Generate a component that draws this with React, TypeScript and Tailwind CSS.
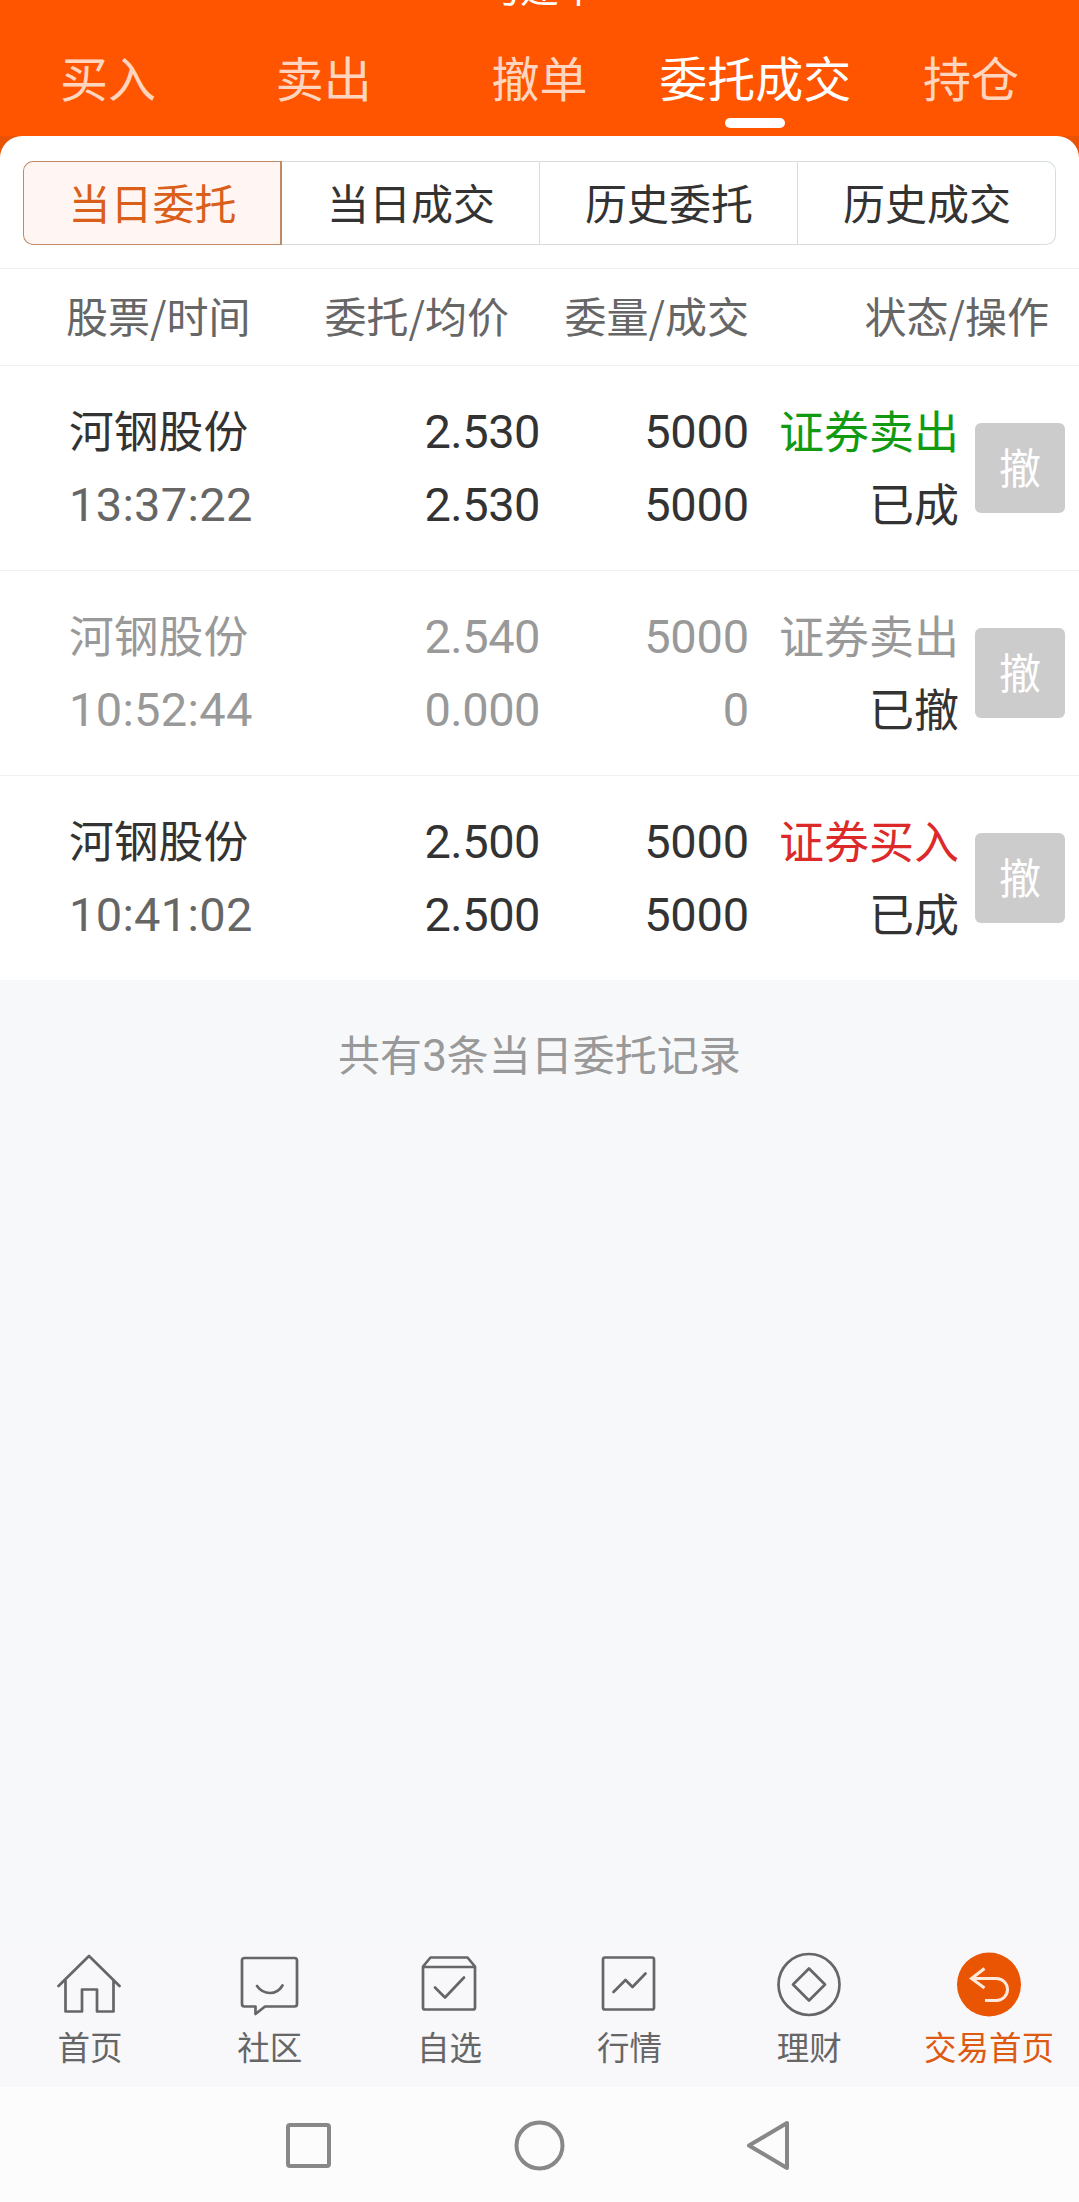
import type { ReactNode } from 'react';

/**
 * Order list screen: top trade tabs, order filter, today's orders, bottom nav.
 */

interface Order {
  name: string;
  time: string;
  price: string;
  avgPrice: string;
  amount: string;
  filled: string;
  side: string;
  sideColor: string;
  status: string;
  cancelled?: boolean;
}

const TABS = ['买入', '卖出', '撤单', '委托成交', '持仓'];
const ACTIVE_TAB = '委托成交';

const FILTERS = ['当日委托', '当日成交', '历史委托', '历史成交'];

const ORDERS: Order[] = [
  {
    name: '河钢股份', time: '13:37:22', price: '2.530', avgPrice: '2.530',
    amount: '5000', filled: '5000', side: '证券卖出', sideColor: 'text-[#129a12]', status: '已成',
  },
  {
    name: '河钢股份', time: '10:52:44', price: '2.540', avgPrice: '0.000',
    amount: '5000', filled: '0', side: '证券卖出', sideColor: 'text-[#999999]', status: '已撤', cancelled: true,
  },
  {
    name: '河钢股份', time: '10:41:02', price: '2.500', avgPrice: '2.500',
    amount: '5000', filled: '5000', side: '证券买入', sideColor: 'text-[#dc2a2a]', status: '已成',
  },
];

// ─── Icons ───────────────────────────────────────────────────────────────────

function NavIcon({ children }: { children: ReactNode }) {
  return (
    <svg
      viewBox="0 0 66 66"
      className="block h-[66px] w-[66px]"
      fill="none"
      stroke="#666666"
      strokeWidth="2.7"
      strokeLinecap="round"
      strokeLinejoin="round"
    >
      {children}
    </svg>
  );
}

const NAV_ITEMS: { label: string; icon: ReactNode; active?: boolean }[] = [
  {
    label: '首页',
    icon: <path d="M1.500 34 32 4l30.500 30M8.500 28.500v31H25V37.500h15v22h16.500v-31" />,
  },
  {
    label: '社区',
    icon: (
      <>
        <path d="M7.500 6h50q2.500 0 2.500 2.500v43.500q0 2.500-2.500 2.500H28l-9.500 7.500v-7.500h-11Q5 54.500 5 52V8.500Q5 6 7.500 6Z" />
        <path d="M20 34q5 7 13 7t12.500-7.500" />
      </>
    ),
  },
  {
    label: '自选',
    icon: (
      <>
        <path d="M6 14.500 13.500 5.500h37L58 14.500v41q0 2-2 2H8q-2 0-2-2ZM6 15h52" />
        <path d="m18 35.500 10 10 19-20" />
      </>
    ),
  },
  {
    label: '行情',
    icon: (
      <>
        <rect x="7" y="5.500" width="51" height="52" rx="2" />
        <path d="m17.500 40 12-12 7 7 13-13.500" />
      </>
    ),
  },
  {
    label: '理财',
    icon: (
      <>
        <circle cx="33" cy="32.500" r="30.500" />
        <path d="m33 16.500 16 16-16 16-16-16Z" />
      </>
    ),
  },
  {
    label: '交易首页',
    active: true,
    icon: (
      <>
        <circle cx="33" cy="32.500" r="32" fill="#ea5504" stroke="none" />
        <path d="M28.500 16.500 15.500 26.500 28.500 36M16 26.500h24.500a11 11 0 0 1 0 22H29" stroke="#ffe9dc" strokeWidth="3" strokeLinecap="butt" strokeLinejoin="miter" />
      </>
    ),
  },
];

// ─── Sections ────────────────────────────────────────────────────────────────

function TradeTabs() {
  return (
    <header className="h-[136px] bg-[#ff5500]">
      {/* account name, scrolled almost out of view */}
      <div className="flex h-[22px] justify-center overflow-hidden text-[39px] text-white">
        <span className="-mt-[34px] leading-[39px]">马建华</span>
      </div>
      <nav className="grid grid-cols-5 text-[48px]">
        {TABS.map((tab) => (
          <div key={tab} className="flex h-[114px] flex-col items-center pt-[19px]">
            <span className={`whitespace-nowrap leading-[70px] ${tab === ACTIVE_TAB ? 'text-white' : 'text-[#ffd5bf]'}`}>
              {tab}
            </span>
            {tab === ACTIVE_TAB && <span className="mt-[7px] h-2.5 w-[60px] rounded-full bg-white" />}
          </div>
        ))}
      </nav>
    </header>
  );
}

function OrderFilter() {
  return (
    <div className="px-[23px] pt-[25px] pb-[23px]">
      <div className="grid h-[84px] grid-cols-[259px_258px_258px_258px] text-[42px] leading-[60px] text-[#333333]">
        {FILTERS.map((label, i) => (
          <div
            key={label}
            className={`flex items-center justify-center border pb-[3px] pl-px ${
              i === 0
                ? 'rounded-l-[10px] border-r-2 border-[#c08a62] bg-[#fff6f3] text-[#d95f1a]'
                : 'border-l-0 border-[#d6dcdf] last:rounded-r-[10px]'
            }`}
          >
            {label}
          </div>
        ))}
      </div>
    </div>
  );
}

function TableHead() {
  return (
    <div className="flex h-[98px] items-center border-y border-[#f0f0f1] pb-[5px] text-[42px] text-[#666666]">
      <span className="w-[251px] pl-[66px] whitespace-nowrap">股票/时间</span>
      <span className="w-[258px] text-right">委托/均价</span>
      <span className="w-[240px] text-right">委量/成交</span>
      <span className="w-[300px] text-right">状态/操作</span>
    </div>
  );
}

function OrderRow({ order }: { order: Order }) {
  const main = order.cancelled ? 'text-[#999999]' : 'text-[#333333]';
  const time = order.cancelled ? 'text-[#999999]' : 'text-[#666666]';

  return (
    <div className="flex h-[205px] items-center border-b border-[#f0f0f1] text-[45px] leading-[73px] last:h-[204px] last:border-b-0">
      <div className="w-[251px] pl-[69px] whitespace-nowrap">
        <div className={`-mt-[3px] mb-[3px] text-[44.8px] ${main}`}>{order.name}</div>
        <div className={`font-[Roboto] text-[47px] tracking-[0.3px] ${time}`}>{order.time}</div>
      </div>
      <div className={`w-[289px] text-right font-[Roboto] text-[47px] tracking-[-0.5px] ${main}`}>
        <div>{order.price}</div>
        <div>{order.avgPrice}</div>
      </div>
      <div className={`w-[209px] text-right font-[Roboto] text-[47px] tracking-[-0.2px] ${main}`}>
        <div>{order.amount}</div>
        <div>{order.filled}</div>
      </div>
      <div className="w-[210px] pb-[5px] text-right">
        <div className={order.sideColor}>{order.side}</div>
        <div className="text-[#333333]">{order.status}</div>
      </div>
      <button className="ml-4 flex h-[90px] w-[90px] items-center justify-center rounded-md bg-[#cccccc] pb-[5px] text-[42px] text-white">
        撤
      </button>
    </div>
  );
}

function BottomNav() {
  return (
    <nav className="grid h-[145px] grid-cols-6 bg-[#f8f8fa]">
      {NAV_ITEMS.map((item) => (
        <div key={item.label} className="flex flex-col items-center pt-[10px]">
          <NavIcon>{item.icon}</NavIcon>
          <span
            className={`mt-1 text-[32.5px] leading-[48px] whitespace-nowrap ${item.active ? 'text-[#dd5a12]' : 'text-[#666666]'}`}
          >
            {item.label}
          </span>
        </div>
      ))}
    </nav>
  );
}

function SystemBar() {
  return (
    <div className="flex h-[115px] items-center justify-center gap-[180px] bg-[#fcfcfc] pt-[2px]">
      <svg viewBox="0 0 51 51" className="h-[51px] w-[51px]" fill="none" stroke="#888888" strokeWidth="4">
        <rect x="5" y="5" width="41" height="41" rx="2" />
      </svg>
      <svg viewBox="0 0 51 51" className="h-[51px] w-[51px]" fill="none" stroke="#888888" strokeWidth="4">
        <circle cx="25.500" cy="25.500" r="23" />
      </svg>
      <svg viewBox="0 0 51 51" className="h-[51px] w-[51px]" fill="none" stroke="#888888" strokeWidth="4" strokeLinejoin="round">
        <path d="M42 3v45L4 25.500Z" />
      </svg>
    </div>
  );
}

export default function App() {
  return (
    <div className="flex h-[2202px] w-[1079px] flex-col overflow-hidden bg-[#f7f8fa] font-['Noto_Sans_CJK_SC',sans-serif]">
      <TradeTabs />
      <div className="bg-[#ea5205]">
        <div className="rounded-t-[22px] bg-white">
          <OrderFilter />
        </div>
      </div>
      <div className="bg-white">
        <TableHead />
        {ORDERS.map((order) => (
          <OrderRow key={order.time} order={order} />
        ))}
      </div>
      <p className="mt-[43px] text-center text-[42px] leading-[60px] text-[#999999]">
        共有<span className="font-[Roboto] text-[44px]">3</span>条当日委托记录
      </p>
      <div className="mt-auto">
        <BottomNav />
        <SystemBar />
      </div>
    </div>
  );
}
